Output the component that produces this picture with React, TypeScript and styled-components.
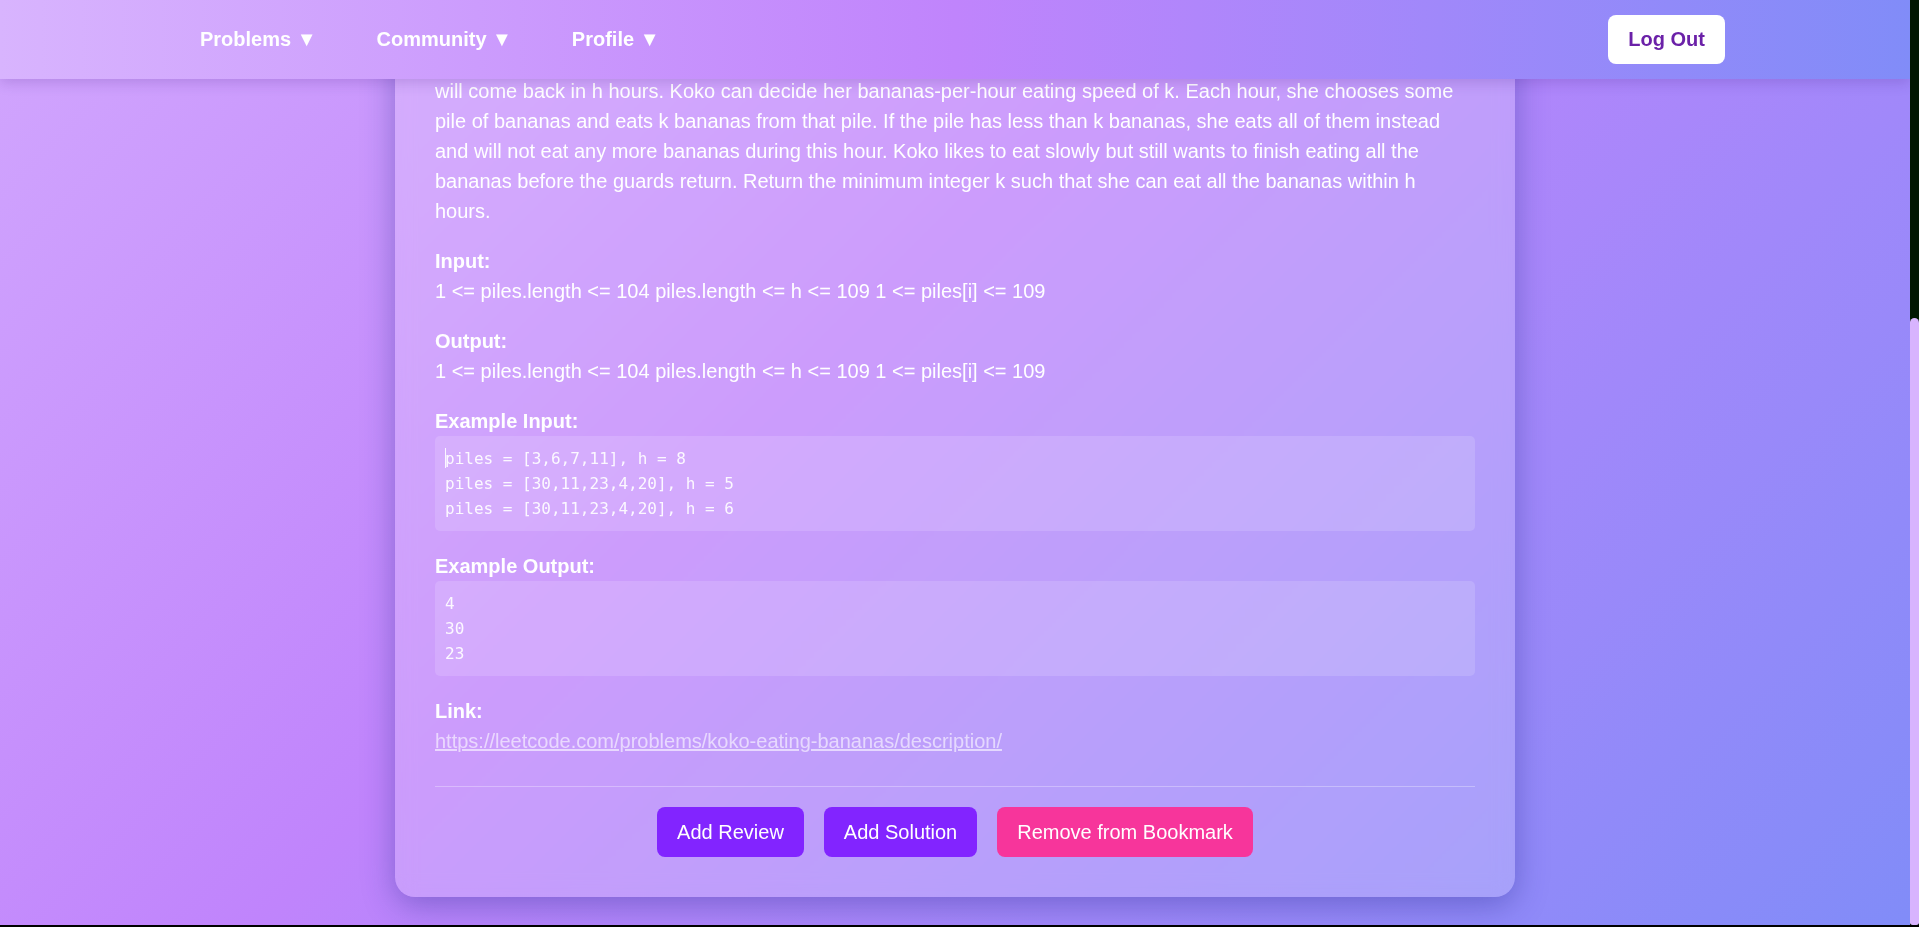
import React, { useLayoutEffect, useRef, useState } from "react";
import styled, { createGlobalStyle } from "styled-components";

const GlobalStyle = createGlobalStyle`
  html, body {
    margin: 0;
    padding: 0;
    height: 100%;
    overflow: hidden;
    background: #000;
  }
  #root { height: 100%; }
  *, *::before, *::after { box-sizing: border-box; }
`;

const Shell = styled.div`
  display: flex;
  height: calc(100vh - 2px);
  font-family: "Liberation Sans", Arial, sans-serif;
  color: #fff;
`;

const Scroller = styled.div`
  flex: 1;
  min-width: 0;
  overflow-y: scroll;
  scrollbar-width: none;
  &::-webkit-scrollbar {
    display: none;
  }
`;

const ScrollTrack = styled.div`
  width: 9px;
  flex: none;
  display: flex;
  flex-direction: column;
  background: #011701;
`;

const ScrollThumb = styled.div`
  width: 100%;
  border-radius: 5px 5px 3px 3px;
  background: #d8b4fe;
`;

const Page = styled.div`
  min-height: 100%;
  background: linear-gradient(135deg, #d8b4fe 0%, #c084fc 50%, #818cf8 100%);
`;

const Nav = styled.nav`
  position: sticky;
  top: 0;
  z-index: 10;
  height: 79px;
  display: flex;
  align-items: center;
  justify-content: space-between;
  padding: 0 185px;
  background: linear-gradient(to right, #d8b4fe, #c084fc, #818cf8);
  box-shadow: 0 4px 12px rgba(60, 20, 120, 0.18);
`;

const Menu = styled.ul`
  display: flex;
  gap: 30px;
  margin: 0;
  padding: 0;
  list-style: none;
`;

const MenuButton = styled.button`
  background: none;
  border: none;
  padding: 8px 15px;
  color: #fff;
  font-family: inherit;
  font-size: 20px;
  font-weight: 700;
  line-height: 23px;
  cursor: pointer;
`;

const LogOut = styled.button`
  background: #fff;
  border: none;
  border-radius: 8px;
  padding: 13px 20px;
  color: #6b21a8;
  font-family: inherit;
  font-size: 20px;
  font-weight: 700;
  line-height: 23px;
  cursor: pointer;
`;

const Main = styled.main`
  padding: 80px 0 28px;
`;

const Card = styled.article`
  width: 1120px;
  margin: 0 auto;
  padding: 40px;
  border-radius: 20px;
  background: rgba(255, 255, 255, 0.2);
  backdrop-filter: blur(10px);
  box-shadow: 0 8px 32px rgba(31, 38, 135, 0.37);
`;

const Title = styled.h1`
  margin: 0 0 22px;
  font-size: 32px;
  line-height: 40px;
  font-weight: 700;
`;

const Section = styled.section`
  margin-bottom: 20px;
  font-size: 20px;
  line-height: 30px;
`;

const Label = styled.div`
  font-size: 20px;
  line-height: 30px;
  font-weight: 700;
`;

const Text = styled.p`
  margin: 0;
  font-size: 20px;
  line-height: 30px;
`;

const Code = styled.pre`
  margin: 0;
  padding: 10px;
  border-radius: 5px;
  background: rgba(255, 255, 255, 0.14);
  color: rgba(255, 255, 255, 0.92);
  font-family: "DejaVu Sans Mono", "Liberation Mono", monospace;
  font-size: 16px;
  line-height: 25px;
  white-space: pre-wrap;
`;

const Caret = styled.span`
  display: inline-block;
  width: 1px;
  height: 20px;
  margin-right: -1px;
  vertical-align: -4px;
  background: rgba(255, 255, 255, 0.9);
`;

const Link = styled.a`
  font-size: 20px;
  line-height: 30px;
  color: rgba(255, 255, 255, 0.6);
  text-decoration: underline;
`;

const Actions = styled.div`
  display: flex;
  justify-content: center;
  gap: 20px;
  margin-top: 30px;
  padding-top: 20px;
  border-top: 1px solid rgba(255, 255, 255, 0.3);
`;

const ActionButton = styled.button<{ $variant: "primary" | "danger" }>`
  border: none;
  border-radius: 8px;
  padding: 10px 20px;
  font-family: inherit;
  font-size: 20px;
  line-height: 30px;
  color: #fff;
  background: ${(p) => (p.$variant === "danger" ? "#f7359b" : "#8224ff")};
  cursor: pointer;
`;

const meta = [
  { label: "Difficulty:", value: "Medium" },
  { label: "Topic:", value: "Binary Search" },
  { label: "Platform:", value: "LeetCode" },
];

export default function App() {
  const ref = useRef<HTMLDivElement>(null);
  const [thumb, setThumb] = useState({ top: 0, height: 0 });

  const measure = () => {
    const el = ref.current;
    if (!el) return;
    const ratio = el.clientHeight / el.scrollHeight;
    setThumb({ top: el.scrollTop * ratio, height: el.clientHeight * ratio });
  };

  useLayoutEffect(() => {
    const el = ref.current;
    if (el) el.scrollTop = el.scrollHeight;
    measure();
  }, []);

  return (
    <>
      <GlobalStyle />
      <Shell>
        <Scroller ref={ref} onScroll={measure}>
          <Page>
            <Nav>
              <Menu>
                <li>
                  <MenuButton>Problems ▼</MenuButton>
                </li>
                <li>
                  <MenuButton>Community ▼</MenuButton>
                </li>
                <li>
                  <MenuButton>Profile ▼</MenuButton>
                </li>
              </Menu>
              <LogOut>Log Out</LogOut>
            </Nav>
            <Main>
              <Card>
                <Title>Koko Eating Bananas</Title>
                {meta.map((m) => (
                  <Section key={m.label}>
                    <Label>{m.label}</Label>
                    <Text>{m.value}</Text>
                  </Section>
                ))}
                <Label>Description:</Label>
                <Section>
                  <Text>
                    Koko loves to eat bananas. There are n piles, the ith pile has piles[i] bananas. The guards have gone and
                    <br />
                    will come back in h hours. Koko can decide her bananas-per-hour eating speed of k. Each hour, she chooses
                    some pile of bananas and eats k bananas from that pile. If the pile has less than k bananas, she eats all
                    of them instead and will not eat any more bananas during this hour. Koko likes to eat slowly but still
                    wants to finish eating all the bananas before the guards return. Return the minimum integer k such that
                    she can eat all the bananas within h hours.
                  </Text>
                </Section>
                <Section>
                  <Label>Input:</Label>
                  <Text>1 &lt;= piles.length &lt;= 104 piles.length &lt;= h &lt;= 109 1 &lt;= piles[i] &lt;= 109</Text>
                </Section>
                <Section>
                  <Label>Output:</Label>
                  <Text>1 &lt;= piles.length &lt;= 104 piles.length &lt;= h &lt;= 109 1 &lt;= piles[i] &lt;= 109</Text>
                </Section>
                <Section>
                  <Label>Example Input:</Label>
                  <Code>
                    <Caret />
                    {"piles = [3,6,7,11], h = 8\npiles = [30,11,23,4,20], h = 5\npiles = [30,11,23,4,20], h = 6"}
                  </Code>
                </Section>
                <Section>
                  <Label>Example Output:</Label>
                  <Code>{"4\n30\n23"}</Code>
                </Section>
                <Section>
                  <Label>Link:</Label>
                  <Link href="#">https://leetcode.com/problems/koko-eating-bananas/description/</Link>
                </Section>
                <Actions>
                  <ActionButton $variant="primary">Add Review</ActionButton>
                  <ActionButton $variant="primary">Add Solution</ActionButton>
                  <ActionButton $variant="danger">Remove from Bookmark</ActionButton>
                </Actions>
              </Card>
            </Main>
          </Page>
        </Scroller>
        <ScrollTrack>
          <ScrollThumb style={{ marginTop: thumb.top, height: thumb.height }} />
        </ScrollTrack>
      </Shell>
    </>
  );
}
